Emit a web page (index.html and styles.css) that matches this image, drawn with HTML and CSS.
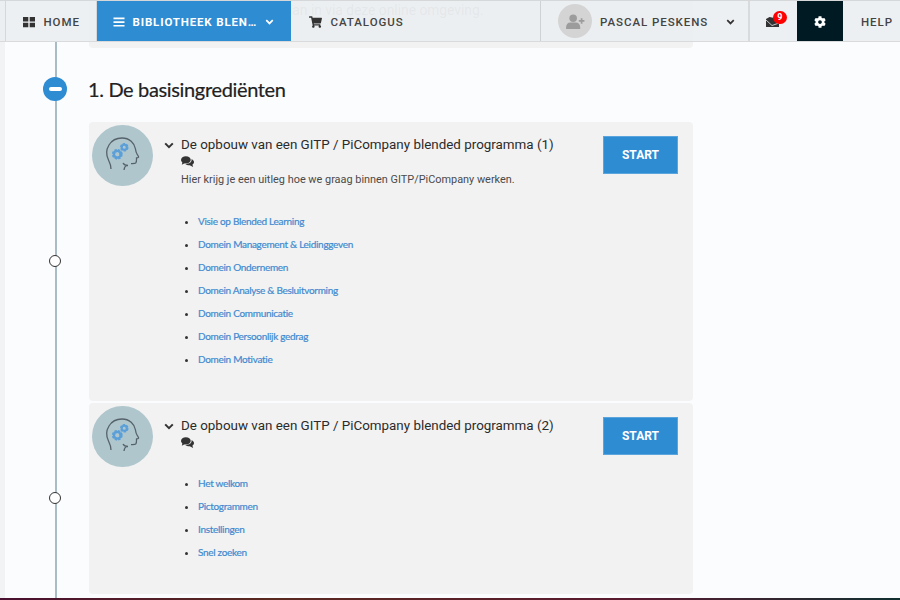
FILE: index.html
```html
<!DOCTYPE html>
<html lang="nl">
<head>
<meta charset="utf-8">
<title>Bibliotheek Blended</title>
<link rel="stylesheet" href="styles.css">
</head>
<body>
<svg class="defs" width="0" height="0" aria-hidden="true">
  <defs>
    <symbol id="chev" viewBox="0 0 10 7"><path d="M1.200 1.400 5 5.200 8.800 1.400" fill="none" stroke="currentColor" stroke-width="2"/></symbol>
    <symbol id="comments" viewBox="0 0 24 20"><ellipse cx="9" cy="7" rx="9" ry="6.600" fill="currentColor"/><path d="M3 10 1.500 16 9 12Z" fill="currentColor"/><path d="M19.500 5.500C22.500 7 24 9 24 11c0 2-1 3.600-3 4.800L22.500 20 16 16.800c-3 .2-6-.6-8-2.400 6 .4 12.500-2.400 11.500-8.900Z" fill="currentColor"/></symbol>
    <symbol id="head" viewBox="0 0 61 61">
      <circle cx="30.500" cy="30.500" r="30.500" fill="#afc6cd"/>
      <path d="M19 44c0-4-1-6-2.500-9-2.500-5-2-11 .5-15 3-5 8-7 13-7 7.500 0 12.500 5 13.500 11 .3 2 .3 3 1.500 5l1.500 2.500c.4.800-.5 1.200-2 1.500 0 2 .3 4-.8 5-.9.700-3 .5-4.700.6M31 38c1 2 3 2.500 5 2.500M32 45c.3-2 1-4 2.500-4.500" fill="none" stroke="#56626a" stroke-width="1.300"/>
      <circle cx="25.300" cy="29.300" r="3.800" fill="none" stroke="#5b9fd9" stroke-width="3.200" stroke-dasharray="2 1"/>
      <circle cx="25.300" cy="29.300" r="3.400" fill="none" stroke="#5b9fd9" stroke-width="2.200"/>
      <circle cx="32.300" cy="22.300" r="2.900" fill="none" stroke="#5b9fd9" stroke-width="2.800" stroke-dasharray="2 1"/>
      <circle cx="32.300" cy="22.300" r="2.600" fill="none" stroke="#5b9fd9" stroke-width="1.800"/>
    </symbol>
  </defs>
</svg>

<main class="page">
  <div class="intro">
    <p>lan in via deze online omgeving.</p>
  </div>

  <section class="module">
    <header class="module-head">
      <span class="minus"></span>
      <h1>1. De basisingrediënten</h1>
    </header>

    <div class="lesson-row">
      <div class="marker"><span class="dot"></span></div>
      <article class="lesson lesson-tall">
        <svg class="avatar"><use href="#head"/></svg>
        <svg class="toggle"><use href="#chev"/></svg>
        <div class="body">
          <h2>De opbouw van een GITP / PiCompany blended programma (1)</h2>
          <svg class="comments"><use href="#comments"/></svg>
          <p class="desc">Hier krijg je een uitleg hoe we graag binnen GITP/PiCompany werken.</p>
          <ul class="links links-wide">
            <li><a href="#">Visie op Blended Learning</a></li>
            <li><a href="#">Domein Management &amp; Leidinggeven</a></li>
            <li><a href="#">Domein Ondernemen</a></li>
            <li><a href="#">Domein Analyse &amp; Besluitvorming</a></li>
            <li><a href="#">Domein Communicatie</a></li>
            <li><a href="#">Domein Persoonlijk gedrag</a></li>
            <li><a href="#">Domein Motivatie</a></li>
          </ul>
        </div>
        <a class="start" href="#">START</a>
      </article>
    </div>

    <div class="lesson-row">
      <div class="marker"><span class="dot"></span></div>
      <article class="lesson lesson-short">
        <svg class="avatar"><use href="#head"/></svg>
        <svg class="toggle"><use href="#chev"/></svg>
        <div class="body">
          <h2>De opbouw van een GITP / PiCompany blended programma (2)</h2>
          <svg class="comments"><use href="#comments"/></svg>
          <ul class="links links-narrow">
            <li><a href="#">Het welkom</a></li>
            <li><a href="#">Pictogrammen</a></li>
            <li><a href="#">Instellingen</a></li>
            <li><a href="#">Snel zoeken</a></li>
          </ul>
        </div>
        <a class="start" href="#">START</a>
      </article>
    </div>
  </section>
</main>

<nav class="nav">
  <a class="nav-item home" href="#">
    <svg class="ico" viewBox="0 0 12 12"><path d="M0 1h5.300v4.500H0zM6.700 1H12v4.500H6.700zM0 6.800h5.300v4.500H0zM6.700 6.800H12v4.500H6.700z" fill="currentColor"/></svg>
    HOME
  </a>
  <a class="nav-item active" href="#">
    <svg class="ico" viewBox="0 0 12 12"><path d="M.5 1.500h11v1.700H.5zM.5 5.200h11v1.700H.5zM.5 8.900h11v1.700H.5z" fill="currentColor"/></svg>
    <span class="active-label">BIBLIOTHEEK BLEN…</span>
    <svg class="nav-chev"><use href="#chev"/></svg>
  </a>
  <a class="nav-item catalog" href="#">
    <svg class="ico cart" viewBox="0 0 576 512"><path d="M528.120 301.319l47.273-208C578.806 78.301 567.391 64 551.990 64H159.208l-9.166-44.810C147.758 8.021 137.930 0 126.529 0H24C10.745 0 0 10.745 0 24v16c0 13.255 10.745 24 24 24h69.883l70.248 343.435C147.325 417.100 136 435.222 136 456c0 30.928 25.072 56 56 56s56-25.072 56-56c0-15.674-6.447-29.835-16.824-40h209.647C430.447 426.165 424 440.326 424 456c0 30.928 25.072 56 56 56s56-25.072 56-56c0-22.172-12.888-41.332-31.579-50.405l5.517-24.276c3.413-15.018-8.002-29.319-23.403-29.319H218.117l-6.545-32h293.145c11.206 0 20.920-7.754 23.403-18.681z" fill="currentColor"/></svg>
    CATALOGUS
  </a>
  <a class="nav-item user" href="#">
    <span class="user-pic">
      <svg viewBox="0 0 20 16"><circle cx="7.500" cy="4.500" r="4" fill="currentColor"/><path d="M0 16v-2c0-3 2-5 4.500-5h6c2.500 0 4.500 2 4.500 5v2z" fill="currentColor"/><path d="M13.500 6.500h6v1.800h-6z M15.600 4.400h1.800v6h-1.800z" fill="currentColor"/></svg>
    </span>
    PASCAL PESKENS
    <svg class="nav-chev"><use href="#chev"/></svg>
  </a>
  <a class="nav-item mail" href="#">
    <svg class="mail-ico" viewBox="0 0 13 10"><path d="M0 2 3.500 0 13 2v8H0z" fill="currentColor"/><path d="M0 3 6 8.500 13 6" fill="none" stroke="#eceff1" stroke-width=".8"/></svg>
    <span class="badge">9</span>
  </a>
  <a class="nav-item gear" href="#">
    <svg class="ico" viewBox="0 0 512 512"><path d="M487.400 315.700l-42.600-24.600c4.300-23.200 4.300-47 0-70.200l42.600-24.600c4.900-2.800 7.100-8.600 5.500-14-11.100-35.600-30-67.800-54.700-94.600-3.800-4.100-10-5.100-14.800-2.300L380.800 110c-17.900-15.400-38.500-27.300-60.800-35.100V25.800c0-5.600-3.900-10.500-9.400-11.700-36.700-8.200-74.300-7.800-109.200 0-5.500 1.200-9.400 6.100-9.400 11.700V75c-22.200 7.900-42.800 19.800-60.800 35.100L88.700 85.500c-4.900-2.800-11-1.900-14.800 2.300-24.700 26.700-43.600 58.900-54.700 94.600-1.700 5.400.6 11.200 5.500 14L67.300 221c-4.300 23.200-4.300 47 0 70.200l-42.600 24.600c-4.900 2.800-7.100 8.600-5.500 14 11.100 35.600 30 67.800 54.700 94.600 3.800 4.100 10 5.100 14.800 2.300l42.600-24.600c17.900 15.400 38.500 27.300 60.800 35.100v49.200c0 5.600 3.900 10.500 9.400 11.700 36.700 8.200 74.300 7.800 109.200 0 5.500-1.200 9.400-6.100 9.400-11.700v-49.200c22.200-7.900 42.800-19.800 60.800-35.100l42.600 24.600c4.900 2.800 11 1.900 14.800-2.300 24.700-26.700 43.600-58.900 54.700-94.600 1.500-5.500-.7-11.300-5.600-14.100zM256 336c-44.100 0-80-35.900-80-80s35.900-80 80-80 80 35.900 80 80-35.900 80-80 80z" fill="currentColor"/></svg>
  </a>
  <a class="nav-item help" href="#">HELP</a>
</nav>

<div class="footer-line"></div>
</body>
</html>
```

FILE: styles.css
```css
* { box-sizing: border-box; }

html, body {
  margin: 0;
  height: 600px;
  overflow: hidden;
}

body {
  position: relative;
  background: #fbfcfe;
  font-family: Roboto, "Liberation Sans", sans-serif;
  color: #333;
}

.defs { position: absolute; }

.page {
  margin-left: 5px;
  height: 600px;
  background: #fbfcfe;
  box-shadow: -5px 0 0 #f2f3f5;
}

.intro {
  margin-left: 84px;
  width: 604px;
  height: 48px;
  padding: 2px 0 0 200px;
  background: #f2f2f2;
  border-radius: 0 0 4px 4px;
  font-size: 13.800px;
  line-height: 16px;
  color: #8a8a8a;
}

.intro p { margin: 0; }

.module { position: relative; }

.module::before {
  content: "";
  position: absolute;
  left: 50px;
  top: -6px;
  bottom: -10px;
  width: 1.500px;
  background: #a9bcc5;
}

.module-head {
  height: 74px;
  display: flex;
  align-items: center;
  padding: 8px 0 0 38px;
  gap: 21px;
}

.minus {
  position: relative;
  width: 24px;
  height: 24px;
  border-radius: 50%;
  background: #2e8cd3;
  flex: none;
}

.minus::after {
  content: "";
  position: absolute;
  left: 5.500px;
  top: 10px;
  width: 13px;
  height: 4px;
  border-radius: 2px;
  background: #fff;
}

h1 {
  margin: 0;
  font-family: Lato, sans-serif;
  font-weight: 400;
  font-size: 20px;
  letter-spacing: -.35px;
  line-height: 26px;
  color: #222;
  -webkit-text-stroke: .2px #222;
}

.lesson-row {
  display: flex;
  align-items: center;
  margin-bottom: 2px;
}

.marker {
  position: relative;
  width: 84px;
  padding-left: 44px;
  flex: none;
}

.dot {
  display: block;
  width: 12px;
  height: 12px;
  margin-top: -1px;
  border: 1.500px solid #333;
  border-radius: 50%;
  background: #fff;
}

.lesson {
  width: 604px;
  display: flex;
  align-items: flex-start;
  background: #f2f2f2;
  border-radius: 4px;
  padding: 3px 15px 0 3px;
}

.lesson-tall { height: 279px; }
.lesson-short { height: 191px; }

.avatar {
  width: 61px;
  height: 61px;
  flex: none;
}

.toggle {
  width: 10px;
  height: 7px;
  margin: 17px 0 0 11px;
  flex: none;
  color: #333;
}

.body {
  flex: 1;
  padding: 11px 0 0 7px;
  min-width: 0;
}

h2 {
  margin: 0;
  font-weight: 400;
  font-size: 13.400px;
  line-height: 18px;
  color: #2b2b2b;
}

.comments {
  display: block;
  width: 13px;
  height: 11px;
  margin-top: 2px;
  color: #333;
}

.desc {
  margin: 5px 0 0;
  font-size: 10.900px;
  line-height: 16px;
  color: #4a4a4a;
}

.links {
  margin: 0;
  padding: 0 0 0 17px;
  font-family: Lato, sans-serif;
  font-size: 10px;
  letter-spacing: -.3px;
  line-height: 13px;
  color: #333;
}

.links-wide { margin-top: 27px; }
.links-narrow { margin-top: 29px; }

.links li + li { margin-top: 10px; }

.links a {
  color: #3f8ad0;
  text-decoration: none;
  -webkit-text-stroke: .2px #3f8ad0;
}

.start {
  width: 75px;
  height: 38px;
  margin: 11px 0 0 1px;
  flex: none;
  display: flex;
  align-items: center;
  justify-content: center;
  background: #2e8cd3;
  border: 1px solid #5aa5de;
  color: #fff;
  font-size: 12px;
  font-weight: 700;
  text-decoration: none;
}

.nav {
  position: absolute;
  left: 0;
  top: 0;
  width: 900px;
  height: 42px;
  display: flex;
  background: rgba(235, 239, 241, .92);
  border-top: 1px solid #d5d7d9;
  border-bottom: 1px solid #d8dadc;
  font-size: 11.500px;
  font-weight: 500;
  letter-spacing: .95px;
  color: #444;
}

.nav-item {
  display: flex;
  align-items: center;
  height: 40px;
  padding-top: 1px;
  flex: none;
  color: #444;
  text-decoration: none;
  white-space: nowrap;
}

.ico {
  width: 12px;
  height: 12px;
  flex: none;
}

.home {
  margin-left: 5px;
  width: 92px;
  padding-left: 17px;
  gap: 8.500px;
  border-left: 1px solid #d5d7d9;
  border-right: 1px solid #d5d7d9;
}

.home .ico { color: #333; }

.active {
  width: 194px;
  padding-left: 16px;
  gap: 7.500px;
  background: #2e8cd3;
  color: #fff;
  font-weight: 700;
}

.active-label { letter-spacing: .85px; }

.active .nav-chev { margin-left: 0; }

.nav-chev {
  width: 9px;
  height: 6px;
  margin-left: 9px;
  flex: none;
}

.catalog {
  width: 250px;
  padding-left: 18px;
  gap: 8.500px;
  border-right: 1px solid #cfd2d4;
}

.catalog .ico { color: #333; }

.cart { width: 13px; }

.user {
  width: 209px;
  padding-left: 17px;
  gap: 8px;
  border-right: 2px solid #d8dadc;
}

.user .nav-chev {
  margin-left: 10px;
  color: #333;
}

.user-pic {
  width: 34px;
  height: 34px;
  margin-top: -1px;
  border-radius: 50%;
  background: #d4d4d4;
  color: #9c9c9c;
  display: flex;
  align-items: center;
  justify-content: center;
}

.user-pic svg {
  width: 19px;
  height: 15px;
}

.mail {
  position: relative;
  width: 47px;
  padding-left: 16px;
}

.mail-ico {
  width: 13px;
  height: 10px;
  color: #333;
}

.badge {
  position: absolute;
  left: 23px;
  top: 9.500px;
  width: 13.500px;
  height: 13.500px;
  border-radius: 50%;
  background: #f00;
  color: #fff;
  font-size: 9px;
  font-weight: 700;
  letter-spacing: 0;
  line-height: 13.500px;
  text-align: center;
}

.gear {
  width: 46px;
  justify-content: center;
  background: #001a23;
  color: #fff;
}

.help {
  padding-left: 18px;
}

.footer-line {
  position: absolute;
  left: 0;
  right: 0;
  bottom: 0;
  height: 2px;
  background: linear-gradient(90deg, #4a1030, #5a2a20 30%, #5a1a30 70%, #103030);
}
```
